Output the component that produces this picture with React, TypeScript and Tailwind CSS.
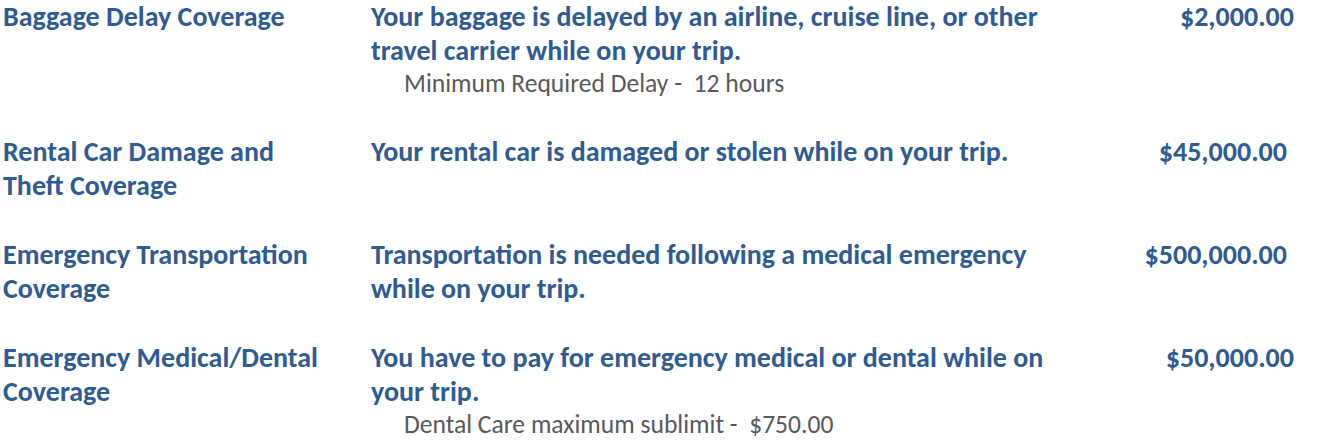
import React from "react";

const rows = [
  {
    title: "Baggage Delay Coverage",
    desc: "Your baggage is delayed by an airline, cruise line, or other travel carrier while on your trip.",
    sub: "Minimum Required Delay -  12 hours",
    amount: "$2,000.00",
    pr: "pr-[42px]",
  },
  {
    title: "Rental Car Damage and Theft Coverage",
    desc: "Your rental car is damaged or stolen while on your trip.",
    amount: "$45,000.00",
    pr: "pr-[49px]",
  },
  {
    title: "Emergency Transportation Coverage",
    desc: "Transportation is needed following a medical emergency while on your trip.",
    amount: "$500,000.00",
    pr: "pr-[49px]",
  },
  {
    title: "Emergency Medical/Dental Coverage",
    desc: "You have to pay for emergency medical or dental while on your trip.",
    sub: "Dental Care maximum sublimit -  $750.00",
    amount: "$50,000.00",
    pr: "pr-[42px]",
  },
];

export default function App() {
  return (
    <div
      className="w-[1336px] h-[441px] bg-white overflow-hidden pl-[3px] flex flex-col gap-[35px]"
      style={{ fontFamily: "Carlito, 'Open Sans', 'Liberation Sans', sans-serif" }}
    >
      {rows.map((r, i) => (
        <div key={i} className="flex">
          <div className="w-[368px] shrink-0">
            <div className="w-[330px] text-[28px] leading-[34px] font-bold text-[#2f5b93]">{r.title}</div>
          </div>
          <div className="w-[700px] shrink-0">
            <div className="text-[28px] leading-[34px] font-bold text-[#2f5b93]">{r.desc}</div>
            {r.sub && (
              <div className="pl-[33px] text-[25.6px] leading-[32px] text-[#595959] whitespace-pre">{r.sub}</div>
            )}
          </div>
          <div className={`flex-1 text-right text-[28px] leading-[34px] font-bold text-[#2f5b93] ${r.pr}`}>
            {r.amount}
          </div>
        </div>
      ))}
    </div>
  );
}
